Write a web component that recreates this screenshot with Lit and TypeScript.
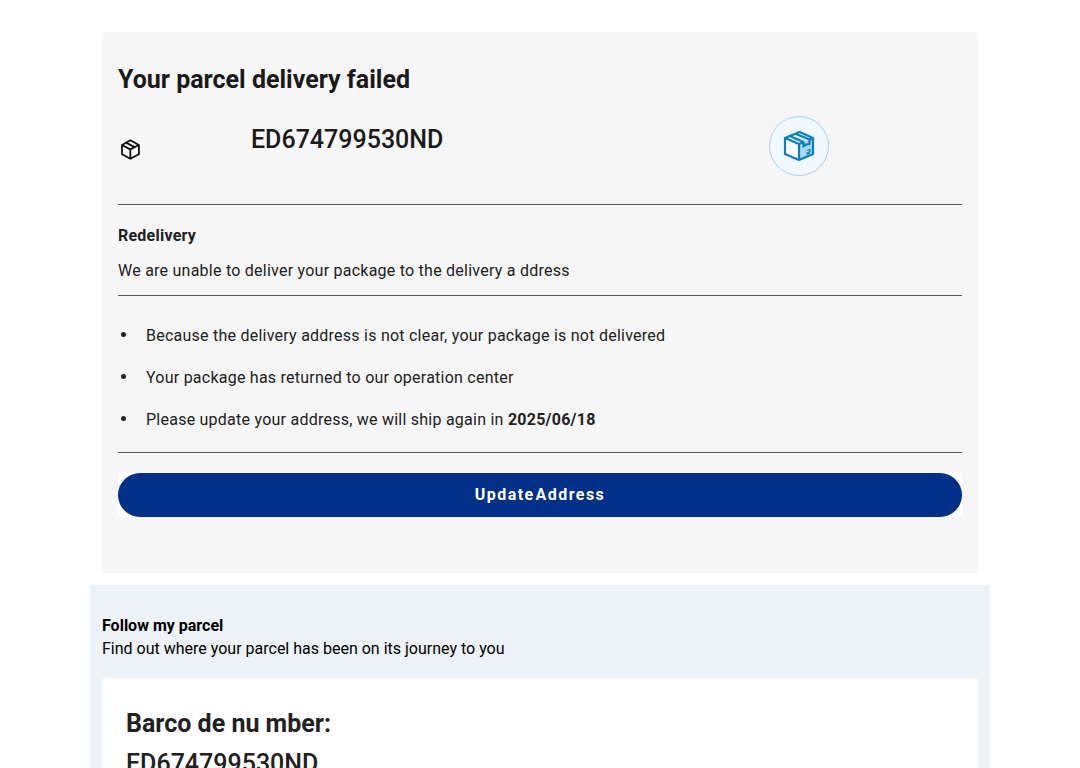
import { LitElement, html, css } from "lit";
import { customElement, property } from "lit/decorators.js";

@customElement("app-root")
export class AppRoot extends LitElement {
  @property() tracking = "ED674799530ND";
  @property() shipDate = "2025/06/18";

  static styles = css`
    :host {
      display: block;
      font-family: Roboto, "Liberation Sans", sans-serif;
      font-size: 16px;
      line-height: 24px;
      color: #212121;
      background: #fff;
      height: 100vh;
      overflow: hidden auto;
      scrollbar-width: none;
    }
    * {
      box-sizing: border-box;
    }
    h1,
    h2,
    h3,
    p,
    ul {
      margin: 0;
      padding: 0;
    }
    .page {
      max-width: 900px;
      margin: 0 auto;
      padding-top: 32px;
    }
    .notice {
      margin: 0 12px 12px;
      padding: 32px 16px 56px;
      border-radius: 4px;
      background: #f6f6f6;
    }
    .title {
      font-size: 25px;
      line-height: 32px;
      font-weight: 700;
      color: #1a1a1a;
    }
    .summary {
      display: grid;
      grid-template-columns: 133px 1fr 326px;
      align-items: start;
      padding: 20px 0 28px;
      border-bottom: 1px solid #555;
    }
    .box-icon {
      display: block;
      width: 24px;
      height: 24px;
      margin-top: 21px;
    }
    .code {
      font-size: 25px;
      line-height: 32px;
      font-weight: 500;
      color: #1a1a1a;
    }
    .summary .code {
      margin-top: 8px;
    }
    .badge {
      display: block;
      width: 60px;
      height: 60px;
      justify-self: center;
    }
    .spaced {
      letter-spacing: 0.015em;
    }
    .reason {
      padding: 19px 0 12px;
      border-bottom: 1px solid #555;
    }
    .subhead {
      font-size: 16px;
      line-height: 24px;
      font-weight: 700;
      margin-bottom: 11px;
    }
    .steps {
      list-style: none;
      display: grid;
      gap: 18px;
      padding: 28px 0 20px;
      border-bottom: 1px solid #555;
    }
    .step {
      display: grid;
      grid-template-columns: 28px 1fr;
      align-items: center;
    }
    .step::before {
      content: "";
      width: 5px;
      height: 5px;
      margin: 0 0 3px 3px;
      border-radius: 50%;
      background: #212121;
    }
    .action {
      margin-top: 20px;
      background: #fff;
    }
    .update {
      display: flex;
      justify-content: center;
      align-items: center;
      gap: 1px;
      width: 100%;
      height: 44px;
      border: 0;
      border-radius: 22px;
      background: #003087;
      color: #fff;
      font: inherit;
      font-weight: 700;
      letter-spacing: 0.09em;
      cursor: pointer;
    }
    .follow {
      padding: 29px 12px 0;
      background: #edf2f6;
      color: #000;
    }
    .follow-title {
      font-size: 16px;
      line-height: 24px;
      font-weight: 700;
    }
    .follow-text {
      line-height: 22px;
    }
    .panel {
      margin-top: 18px;
      padding: 26px 24px;
      border-radius: 4px 4px 0 0;
      background: #fff;
      color: #212121;
    }
    .panel-title {
      font-size: 25px;
      line-height: 40px;
      font-weight: 700;
    }
    .panel .code {
      line-height: 40px;
      color: #212121;
    }
  `;

  render() {
    return html`
      <main class="page">
        <section class="notice">
          <h1 class="title">Your parcel delivery failed</h1>
          <div class="summary">
            <svg class="box-icon" viewBox="0 0 24 24" fill="none" stroke="#111" stroke-width="1.8" stroke-linejoin="round" aria-hidden="true">
              <path d="M12.300 3.200 20.900 8v9.200L12.300 21.800 4 17.200V8z" />
              <path d="M4 8 12.300 12.400 20.900 8M12.300 12.400v9.400M8.100 5.600l8.400 4.500" />
            </svg>
            <p class="code">${this.tracking}</p>
            <svg class="badge" viewBox="0 0 60 60" fill="none" aria-hidden="true">
              <circle cx="30" cy="30" r="29.5" fill="#f1f8fe" stroke="#a5d3ee" />
              <path d="M16 22 30 28v16l-14-6z" fill="#fff" />
              <path d="M30 28 44 22v16l-14 6z" fill="#a9d8f6" />
              <path d="M16 22 30.500 16 44 22 30 28z" fill="#d9f0ff" />
              <g stroke="#087fc4" stroke-width="2.200" stroke-linejoin="round">
                <path d="M16 22 30.500 16 44 22v16l-14 6-14-6z" />
                <path d="M16 22 30 28v16M30 28l4.500-1.800M40.500 23.700 44 22" />
                <path d="M20.500 20 34.500 26v4.500l2.500-2 3.500-.5v-4.500L26.500 17.700" />
              </g>
              <path d="M38 34.500l3-1v2l-3 1.500v1l3-1" stroke="#087fc4" stroke-width="1.200" />
            </svg>
          </div>
          <div class="reason">
            <h2 class="subhead spaced">Redelivery</h2>
            <p class="spaced">We are unable to deliver your package to the delivery a ddress</p>
          </div>
          <ul class="steps spaced">
            <li class="step"><span>Because the delivery address is not clear, your package is not delivered</span></li>
            <li class="step"><span>Your package has returned to our operation center</span></li>
            <li class="step"><span>Please update your address, we will ship again in <strong>${this.shipDate}</strong></span></li>
          </ul>
          <div class="action">
            <button class="update" type="button"><span>Update</span> <span>Address</span></button>
          </div>
        </section>
        <section class="follow">
          <h2 class="follow-title">Follow my parcel</h2>
          <p class="follow-text">Find out where your parcel has been on its journey to you</p>
          <div class="panel">
            <h3 class="panel-title">Barco de nu mber:</h3>
            <p class="code">${this.tracking}</p>
          </div>
        </section>
      </main>
    `;
  }
}
